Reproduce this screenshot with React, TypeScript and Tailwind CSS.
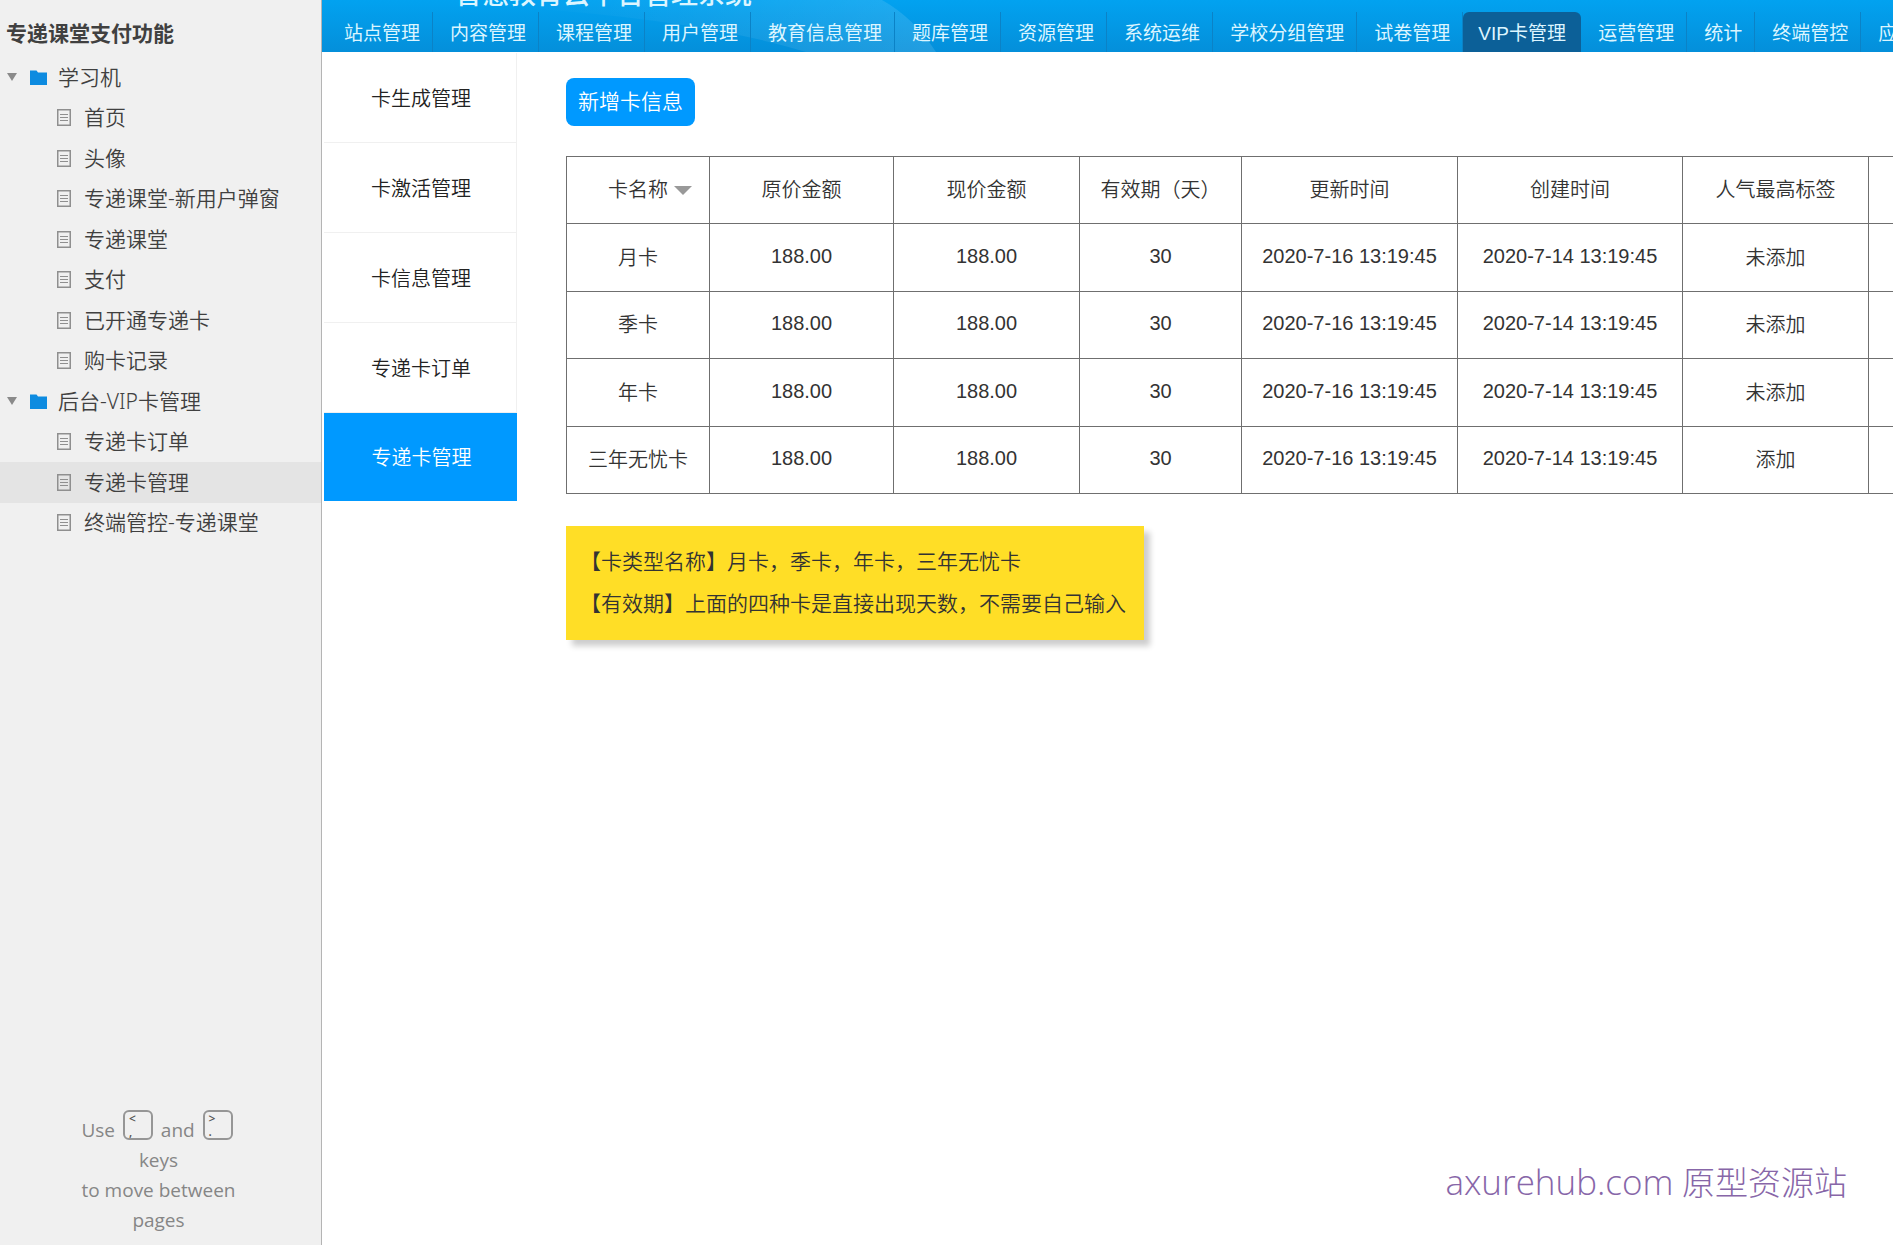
import React from 'react';

const tree = [
  { label: '学习机', folder: true },
  { label: '首页' },
  { label: '头像' },
  { label: '专递课堂-新用户弹窗' },
  { label: '专递课堂' },
  { label: '支付' },
  { label: '已开通专递卡' },
  { label: '购卡记录' },
  { label: '后台-VIP卡管理', folder: true },
  { label: '专递卡订单' },
  { label: '专递卡管理', active: true },
  { label: '终端管控-专递课堂' },
];

const tabs = [
  '站点管理', '内容管理', '课程管理', '用户管理', '教育信息管理', '题库管理', '资源管理', '系统运维',
  '学校分组管理', '试卷管理', 'VIP卡管理', '运营管理', '统计', '终端管控', '应用管理',
];

const menu = ['卡生成管理', '卡激活管理', '卡信息管理', '专递卡订单', '专递卡管理'];

const columns = ['卡名称', '原价金额', '现价金额', '有效期（天）', '更新时间', '创建时间', '人气最高标签'];

const rows = [
  ['月卡', '188.00', '188.00', '30', '2020-7-16 13:19:45', '2020-7-14 13:19:45', '未添加'],
  ['季卡', '188.00', '188.00', '30', '2020-7-16 13:19:45', '2020-7-14 13:19:45', '未添加'],
  ['年卡', '188.00', '188.00', '30', '2020-7-16 13:19:45', '2020-7-14 13:19:45', '未添加'],
  ['三年无忧卡', '188.00', '188.00', '30', '2020-7-16 13:19:45', '2020-7-14 13:19:45', '添加'],
];

function PageIcon() {
  return (
    <svg width="14" height="17" viewBox="0 0 14 17" fill="none" stroke="#8f8f8f" className="shrink-0">
      <rect x="0.75" y="0.75" width="12.5" height="15.5" strokeWidth="1.5" />
      <path d="M3 5.5h8M3 8.5h8M3 11.5h8" strokeWidth="1.2" />
    </svg>
  );
}

function FolderIcon() {
  return (
    <svg width="17" height="15" viewBox="0 0 17 15" className="shrink-0">
      <path d="M0 0.5h6.5l1.5 2h9V15H0z" fill="#0d8be0" />
    </svg>
  );
}

function KeyCap({ top, bottom }: { top: string; bottom: string }) {
  return (
    <kbd className="mx-[3px] inline-block h-[30px] w-[30px] overflow-hidden rounded-md border-2 border-[#969696] pl-1 text-left align-[-3px] font-['Open_Sans',sans-serif] text-xs leading-[13px] font-semibold text-[#555]">
      <span className="block">{top}</span>
      <span className="block">{bottom}</span>
    </kbd>
  );
}

function Sidebar() {
  return (
    <aside className="flex w-[322px] shrink-0 flex-col border-r border-[#b4b4b4] bg-[#f0f0f0] text-[#404040]">
      <h1 className="px-[6px] pt-[18px] pb-[7px] text-[21px] leading-8 font-bold">专递课堂支付功能</h1>
      <nav aria-label="页面">
        <ul className="grid h-[486px] auto-rows-fr font-['Noto_Sans','Noto_Sans_CJK_SC',sans-serif] text-[21px] font-[350]">
          {tree.map((item, i) => (
            <li key={i} className={item.active ? 'bg-[#e4e4e4]' : ''}>
              {item.folder ? (
                <a href="#" className="flex h-full items-center pl-[7px]">
                  <svg width="10" height="8" viewBox="0 0 10 8" className="mr-[13px] shrink-0">
                    <path d="M0 0h10L5 8z" fill="#8a8a8a" />
                  </svg>
                  <FolderIcon />
                  <span className="ml-[11px]">{item.label}</span>
                </a>
              ) : (
                <a href="#" className="flex h-full items-center pl-[57px]">
                  <PageIcon />
                  <span className="ml-[13px]">{item.label}</span>
                </a>
              )}
            </li>
          ))}
        </ul>
      </nav>
      <p className="mt-auto w-[164px] self-center pr-1 pb-[10px] text-center font-['Open_Sans',sans-serif] text-[19px] leading-[30px] text-[#868686]">
        Use <KeyCap top="<" bottom="," /> and <KeyCap top=">" bottom="." /> keys
        <br />
        to move between pages
      </p>
    </aside>
  );
}

function Header() {
  return (
    <header className="relative flex h-[52px] flex-col justify-end overflow-hidden bg-linear-to-b from-[#02a2f0] to-[#048fda] text-[#dcf5ff]">
      <svg className="absolute top-0 left-0" width="640" height="52" viewBox="0 0 640 52">
        <defs>
          <linearGradient id="glow" x1="0" x2="1" y1="0" y2="0">
            <stop offset="0" stopColor="#fff" stopOpacity="0" />
            <stop offset="1" stopColor="#fff" stopOpacity="0.12" />
          </linearGradient>
        </defs>
        <path d="M200 0H560Q592 18 614 52H484Q380 20 200 8z" fill="url(#glow)" />
      </svg>
      <div className="relative shrink-0 pl-[133px] text-[27px] leading-[33px] font-medium">智慧教育云平台管理系统</div>
      <nav className="relative flex h-10 shrink-0 pl-[5px] text-[19px] whitespace-nowrap" aria-label="主导航">
        {tabs.map((tab) =>
          tab === 'VIP卡管理' ? (
            <a key={tab} href="#" aria-current="page" className="flex w-[118px] shrink-0 items-center justify-center rounded-t-md bg-[#0c6098] pt-1">
              {tab}
            </a>
          ) : (
            <a key={tab} href="#" className="flex shrink-0 items-center border-r border-[#0b82c6] pt-1 pr-3 pl-[17px]">
              {tab}
            </a>
          )
        )}
      </nav>
    </header>
  );
}

function CardTable() {
  return (
    <table className="mt-[30px] w-[1480px] table-fixed border-collapse text-center text-xl text-[#333]">
      <colgroup>
        <col className="w-[143px]" />
        <col className="w-[184px]" />
        <col className="w-[186px]" />
        <col className="w-[162px]" />
        <col className="w-[216px]" />
        <col className="w-[225px]" />
        <col className="w-[186px]" />
        <col />
      </colgroup>
      <thead>
        <tr className="h-[67px]">
          {columns.map((name, i) => (
            <th key={name} className="border border-[#6f6f6f] p-0 font-[350] whitespace-nowrap">
              {i === 0 ? (
                <span className="flex items-center justify-center gap-[6px] pl-6">
                  {name}
                  <svg width="18" height="9" viewBox="0 0 18 9">
                    <path d="M0 0h18L9 9z" fill="#999" />
                  </svg>
                </span>
              ) : (
                name
              )}
            </th>
          ))}
          <td className="border border-[#6f6f6f]" />
        </tr>
      </thead>
      <tbody>
        {rows.map((row) => (
          <tr key={row[0]} className="h-[68px] even:h-[67px]">
            {row.map((cell, i) => (
              <td key={i} className={`border border-[#6f6f6f] p-0 font-[350] ${i === 0 || i === 6 ? '' : 'pb-1'}`}>{cell}</td>
            ))}
            <td className="border border-[#6f6f6f]" />
          </tr>
        ))}
      </tbody>
    </table>
  );
}

export default function App() {
  return (
    <div className="relative flex min-h-screen overflow-hidden bg-white font-['Liberation_Sans','Noto_Sans_CJK_SC',sans-serif]">
      <Sidebar />
      <div className="min-w-0 flex-1 overflow-hidden">
        <Header />
        <div className="flex">
          <ul className="mt-px ml-[2px] w-[193px] shrink-0 text-xl font-[350] text-[#222]">
            {menu.map((item) =>
              item === '专递卡管理' ? (
                <li key={item}>
                  <a href="#" className="flex h-[88px] items-center justify-center bg-[#0099ff] pt-[2px] pl-[2px] text-white">{item}</a>
                </li>
              ) : (
                <li key={item}>
                  <a href="#" className="flex h-[90px] items-center justify-center border-r border-b border-[#f0f0f0] pt-[2px] pl-[2px]">{item}</a>
                </li>
              )
            )}
          </ul>
          <main className="min-w-0 flex-1 overflow-hidden pt-[26px] pb-4 pl-[49px]">
            <button className="block h-12 rounded-lg bg-[#0099ff] px-3 text-[21px] font-[350] text-white">新增卡信息</button>
            <CardTable />
            <div className="mt-8 w-[578px] bg-[#ffde26] py-[15px] pl-[14px] text-[21px] leading-[42px] font-[350] whitespace-nowrap text-[#333] shadow-[6px_6px_6px_rgba(0,0,0,0.2)]">
              <p>【卡类型名称】月卡，季卡，年卡，三年无忧卡</p>
              <p>【有效期】上面的四种卡是直接出现天数，不需要自己输入</p>
            </div>
          </main>
        </div>
      </div>
      <div className="absolute right-[46px] bottom-[38px] font-['Open_Sans','Noto_Sans_CJK_SC',sans-serif] text-[33px] font-light text-[#8766a8]">
        <span className="text-[35px] leading-none">axurehub.com</span> 原型资源站
      </div>
    </div>
  );
}
